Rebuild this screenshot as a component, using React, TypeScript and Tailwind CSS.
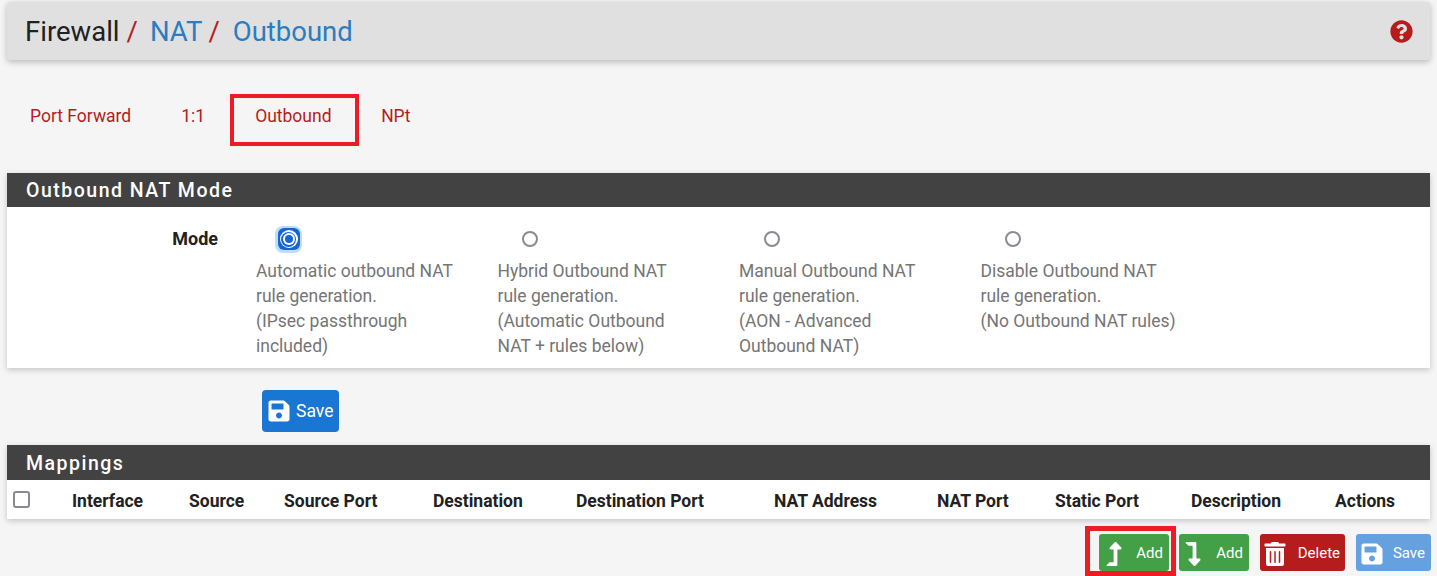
import { FaLevelDownAlt, FaLevelUpAlt, FaQuestionCircle, FaSave, FaTrashAlt } from 'react-icons/fa';

const modes = [
  { lines: ['Automatic outbound NAT', 'rule generation.', '(IPsec passthrough', 'included)'], checked: true },
  { lines: ['Hybrid Outbound NAT', 'rule generation.', '(Automatic Outbound', 'NAT + rules below)'], checked: false },
  { lines: ['Manual Outbound NAT', 'rule generation.', '(AON - Advanced', 'Outbound NAT)'], checked: false },
  { lines: ['Disable Outbound NAT', 'rule generation.', '(No Outbound NAT rules)'], checked: false },
];

const columns = [
  { label: 'Interface', width: 'w-[117px]' },
  { label: 'Source', width: 'w-[95px]' },
  { label: 'Source Port', width: 'w-[149px]' },
  { label: 'Destination', width: 'w-[143px]' },
  { label: 'Destination Port', width: 'w-[198px]' },
  { label: 'NAT Address', width: 'w-[163px]' },
  { label: 'NAT Port', width: 'w-[118px]' },
  { label: 'Static Port', width: 'w-[136px]' },
  { label: 'Description', width: 'w-[144px]' },
  { label: 'Actions', width: 'w-[70px]' },
];

function Radio({ checked }: { checked: boolean }) {
  if (checked) {
    return (
      <span className="flex h-[27px] w-[27px] shrink-0 items-center justify-center rounded-[8px] bg-[#bbdefb]">
        <span className="flex h-[22px] w-[22px] items-center justify-center rounded-[6px] bg-[#1565d8]">
          <span className="flex h-[18px] w-[18px] items-center justify-center rounded-full bg-white">
            <span className="flex h-[15px] w-[15px] items-center justify-center rounded-full bg-[#1565d8]">
              <span className="flex h-[12px] w-[12px] items-center justify-center rounded-full bg-white">
                <span className="h-[8px] w-[8px] rounded-full bg-[#1565d8]" />
              </span>
            </span>
          </span>
        </span>
      </span>
    );
  }
  return <span className="h-4 w-4 rounded-full border-2 border-[#8a8a96] bg-white" />;
}

export default function App() {
  return (
    <div className="h-[576px] w-[1437px] overflow-hidden bg-[#f5f5f5] px-[7px] pt-[2px] font-['Roboto',sans-serif] text-[#212121]">
      <header className="flex h-[58px] items-center justify-between rounded-[3px] bg-[#e0e0e0] pl-[18px] pr-[17px] text-[27.5px] shadow-[0_2px_6px_rgba(0,0,0,0.25)]">
        <h1 className="flex items-baseline pt-[2px] leading-none">
          <span>Firewall</span>
          <span className="ml-[7px] text-[#b71c1c]">/</span>
          <span className="ml-[12px] text-[#2b7cc0]">NAT</span>
          <span className="ml-[6px] text-[#b71c1c]">/</span>
          <span className="ml-[13px] text-[#2b7cc0]">Outbound</span>
        </h1>
        <FaQuestionCircle className="h-[23px] w-[23px] text-[#b71c1c]" />
      </header>

      <nav className="mt-[34px] flex h-[52px] items-start text-[17.5px] text-[#b71c1c]">
        <span className="ml-[23px] mt-[8px] leading-[28px]">Port Forward</span>
        <span className="ml-[50px] mt-[8px] leading-[28px]">1:1</span>
        <span className="ml-[25px] h-[52px] w-[129px] border-4 border-[#ed1c24] pl-[21px] pt-[4px] leading-[28px]">Outbound</span>
        <span className="ml-[22px] mt-[8px] leading-[28px]">NPt</span>
      </nav>

      <section className="mt-[27px] bg-white shadow-[0_2px_6px_rgba(0,0,0,0.2)]">
        <div className="flex h-[34px] items-center bg-[#424242] pl-[19px] pt-[2px] text-[19.5px] font-medium tracking-[1.5px] text-white">
          Outbound NAT Mode
        </div>
        <div className="flex h-[161px] pt-[20px] text-[17.5px] leading-[25px]">
          <div className="w-[211px] text-right text-[18px] font-bold leading-[24px]">Mode</div>
          <div className="ml-[38px] flex">
            {modes.map((mode) => (
              <div key={mode.lines[0]} className="w-[241.5px]">
                <div className="flex h-[24px] w-[65px] items-center justify-center">
                  <Radio checked={mode.checked} />
                </div>
                <div className="mt-[8px] text-[#757575]">
                  {mode.lines.map((line) => (
                    <div key={line} className="whitespace-nowrap">{line}</div>
                  ))}
                </div>
              </div>
            ))}
          </div>
        </div>
      </section>

      <button className="ml-[255px] mt-[22px] flex h-[42px] w-[77px] items-center gap-[5px] rounded-[4px] bg-[#1976d2] pl-[5px] text-[17.5px] text-white">
        <FaSave className="h-[24px] w-[24px]" />
        Save
      </button>

      <section className="mt-[13px] bg-white shadow-[0_2px_6px_rgba(0,0,0,0.2)]">
        <div className="flex h-[35px] items-center bg-[#424242] pl-[19px] pt-[2px] text-[19.5px] font-medium tracking-[1.5px] text-white">
          Mappings
        </div>
        <div className="flex h-[39px] items-center text-[17.5px] font-bold">
          <span className="ml-[6px] h-[17px] w-[17px] rounded-[3px] border-2 border-[#8a8a96] bg-white" />
          <div className="ml-[42px] flex pt-[3px]">
            {columns.map((col) => (
              <span key={col.label} className={`${col.width} whitespace-nowrap`}>{col.label}</span>
            ))}
          </div>
        </div>
      </section>

      <div className="-mr-px mt-[7px] flex items-start justify-end text-[15px] text-white">
        <div className="mr-[3px] h-[50px] w-[91px] border-[5px] border-[#ed1c24] pl-[9px] pt-[3px]">
          <button className="flex h-[37px] w-[70px] items-center justify-between rounded-[3px] bg-[#43a047] pl-[3px] pr-[6px] pt-[2px]">
            <FaLevelUpAlt className="h-[24px] w-[24px]" />
            Add
          </button>
        </div>
        <button className="mt-[8px] flex h-[37px] w-[70px] items-center justify-between rounded-[3px] bg-[#43a047] pl-[2px] pr-[6px] pt-[2px]">
          <FaLevelDownAlt className="h-[24px] w-[24px]" />
          Add
        </button>
        <button className="ml-[11px] mt-[8px] flex h-[37px] w-[85px] items-center justify-between rounded-[3px] bg-[#b71c1c] pl-[3px] pr-[5px] pt-[2px]">
          <FaTrashAlt className="h-[24px] w-[24px]" />
          Delete
        </button>
        <button className="ml-[11px] mt-[8px] flex h-[37px] w-[75px] items-center justify-between rounded-[3px] bg-[#64a1de] pl-[4px] pr-[6px] pt-[2px]">
          <FaSave className="h-[24px] w-[24px]" />
          Save
        </button>
      </div>
    </div>
  );
}
